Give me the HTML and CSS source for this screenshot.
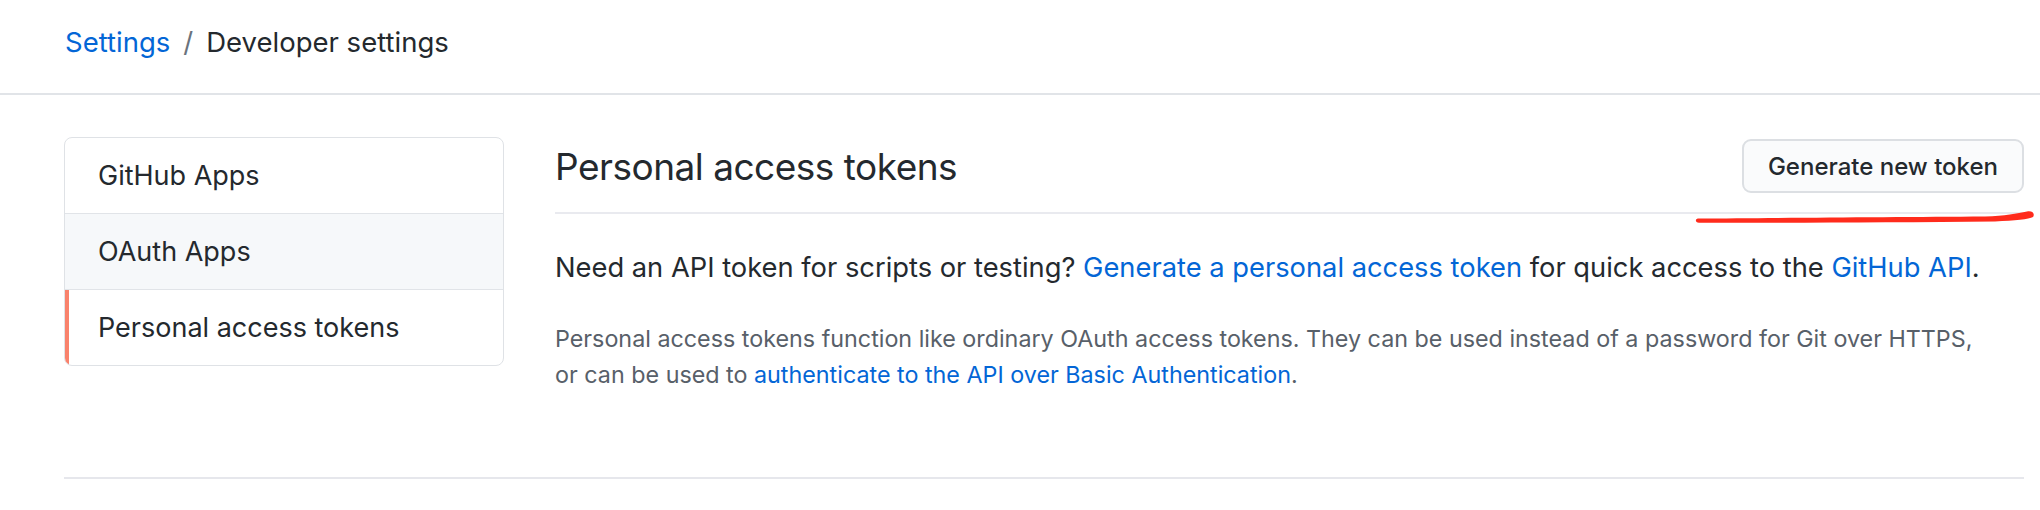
FILE: index.html
```html
<!DOCTYPE html>
<html lang="en">
	<head>
		<meta charset="utf-8" />
		<title>Personal access tokens | Developer settings</title>
		<link rel="stylesheet" href="styles.css">
	</head>
	<body>
		<header class="crumbs">
			<a href="#">Settings</a>
			<span class="sep">/</span>
			<span class="here">Developer settings</span>
		</header>

		<div class="container">
			<nav class="menu">
				<a class="item" href="#">GitHub Apps</a>
				<a class="item hover" href="#">OAuth Apps</a>
				<a class="item selected" href="#">Personal access tokens</a>
			</nav>

			<main class="content">
				<div class="subhead">
					<h2>Personal access tokens</h2>
					<button class="btn">Generate new token</button>
				</div>
				<p class="lead">Need an API token for scripts or testing? <a href="#">Generate a personal access token</a> for quick access to the <a href="#">GitHub API</a>.</p>
				<p class="note">Personal access tokens function like ordinary OAuth access tokens. They can be used instead of a password for Git over HTTPS,<br>or can be used to <a href="#">authenticate to the API over Basic Authentication</a>.</p>
			</main>
		</div>

		<!-- hand-drawn red mark over the screenshot -->
		<svg class="scribble" width="360" height="20" viewBox="0 0 360 20">
			<path d="M3 9.5 C 80 9, 200 8, 290 7.5 C 310 7, 322 4.5, 332 2.5 C 338 1.5, 340 5, 338 8 C 334 10.5, 320 11.5, 300 12.5 C 200 13.5, 90 13.8, 4 13.8 C 0 13.5, 0 10, 3 9.5 Z" fill="#ff2b1c"/>
		</svg>
	</body>
</html>
```

FILE: styles.css
```css
html {
	--text: #24292e;
	--muted: #586069;
	--link: #0366d6;
	--line: #e1e4e8;
}

* {
	box-sizing: border-box;
}

body {
	margin: 0;
	background: #fff;
	color: var(--text);
	font-family: Inter, "Liberation Sans", sans-serif;
}

a {
	color: var(--link);
	text-decoration: none;
}

.crumbs {
	display: flex;
	align-items: center;
	height: 95px;
	padding: 0 0 10px 65px;
	border-bottom: 2px solid var(--line);
	font-size: 27.5px;
}

.crumbs .sep {
	color: #6a737d;
	margin: 0 13px;
}

.container {
	display: flex;
	gap: 51px;
	margin: 42px 16px 0 64px;
	padding-bottom: 84px;
	border-bottom: 2px solid #e6e7ec;
}

.menu {
	flex: 0 0 440px;
	display: flex;
	flex-direction: column;
	align-self: flex-start;
	border: 1px solid #dfe2e6;
	border-radius: 8px;
	overflow: hidden;
}

.menu .item {
	position: relative;
	padding: 18px 33px;
	font-size: 27px;
	line-height: 39px;
	color: var(--text);
	border-top: 1px solid var(--line);
}

.menu .item:first-child {
	border-top: 0;
}

.menu .hover {
	background: #f6f8fa;
}

.menu .selected::before {
	content: "";
	position: absolute;
	left: 0;
	top: 0;
	bottom: 0;
	width: 4px;
	background: #f9826c;
}

.content {
	flex: 1;
}

.subhead {
	display: flex;
	align-items: center;
	justify-content: space-between;
	padding: 2px 0 19px;
	border-bottom: 2px solid #e9eaef;
}

.subhead h2 {
	margin: 0;
	font-size: 37px;
	font-weight: 400;
	letter-spacing: -0.5px;
}

.btn {
	height: 54px;
	padding: 0 24px;
	font-family: inherit;
	font-size: 24px;
	font-weight: 500;
	color: var(--text);
	background: #fafbfc;
	border: 2px solid #dcdfe3;
	border-radius: 9px;
}

.lead {
	margin: 35px 0 0;
	font-size: 27.3px;
	line-height: 38px;
}

.note {
	margin: 34px 0 0;
	font-size: 23.3px;
	line-height: 36px;
	color: var(--muted);
}

.scribble {
	position: absolute;
	left: 1695px;
	top: 209px;
}
```
